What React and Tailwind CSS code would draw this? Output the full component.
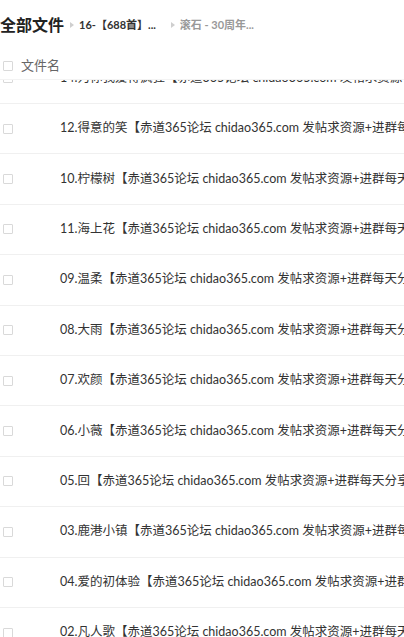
import React from "react";

const files = [
  "14.为你我爱得疯狂",
  "12.得意的笑",
  "10.柠檬树",
  "11.海上花",
  "09.温柔",
  "08.大雨",
  "07.欢颜",
  "06.小薇",
  "05.回",
  "03.鹿港小镇",
  "04.爱的初体验",
  "02.凡人歌",
];

const suffix = "【赤道365论坛 chidao365.com 发帖求资源+进群每天分享】.mp3";

function Checkbox() {
  return <span className="block w-[10px] h-[10px] shrink-0 rounded-[1px] border border-[#d9d9d9] bg-white" />;
}

function Arrow() {
  return <span className="block w-0 h-0 shrink-0 border-y-[3px] border-l-[4px] border-y-transparent border-l-[#cfcfcf]" />;
}

export default function App() {
  return (
    <div
      className="w-[404px] h-[637px] overflow-hidden bg-white text-[#333]"
      style={{ fontFamily: 'Lato, "Noto Sans CJK SC", sans-serif' }}
    >
      {/* Breadcrumb */}
      <div className="h-[50px] flex items-center whitespace-nowrap">
        <span className="text-[16px] font-bold leading-none text-[#222]">全部文件</span>
        <span className="ml-[6px]"><Arrow /></span>
        <span className="ml-[5px] text-[11px] font-bold text-[#333]">16-【688首】...</span>
        <span className="ml-[15px]"><Arrow /></span>
        <span className="ml-[5px] text-[11px] font-bold text-[#999]">滚石 - 30周年...</span>
      </div>

      {/* Column header */}
      <div className="h-[30px] pt-[3px] flex items-center pl-[3px] border-b border-[#f3f3f3]">
        <Checkbox />
        <span className="ml-[8px] text-[13px] text-[#666]">文件名</span>
      </div>

      {/* List, scrolled */}
      <div className="h-[557px] overflow-hidden">
        <div className="mt-[-26.4px]">
          {files.map((name) => (
            <div
              key={name}
              className="h-[50.4px] flex items-center pl-[3px] border-b border-[#f0f0f0] whitespace-nowrap"
            >
              <Checkbox />
              <span className="ml-[47px] text-[12.5px] text-[#333]">
                {name}
                {suffix}
              </span>
            </div>
          ))}
        </div>
      </div>
    </div>
  );
}
